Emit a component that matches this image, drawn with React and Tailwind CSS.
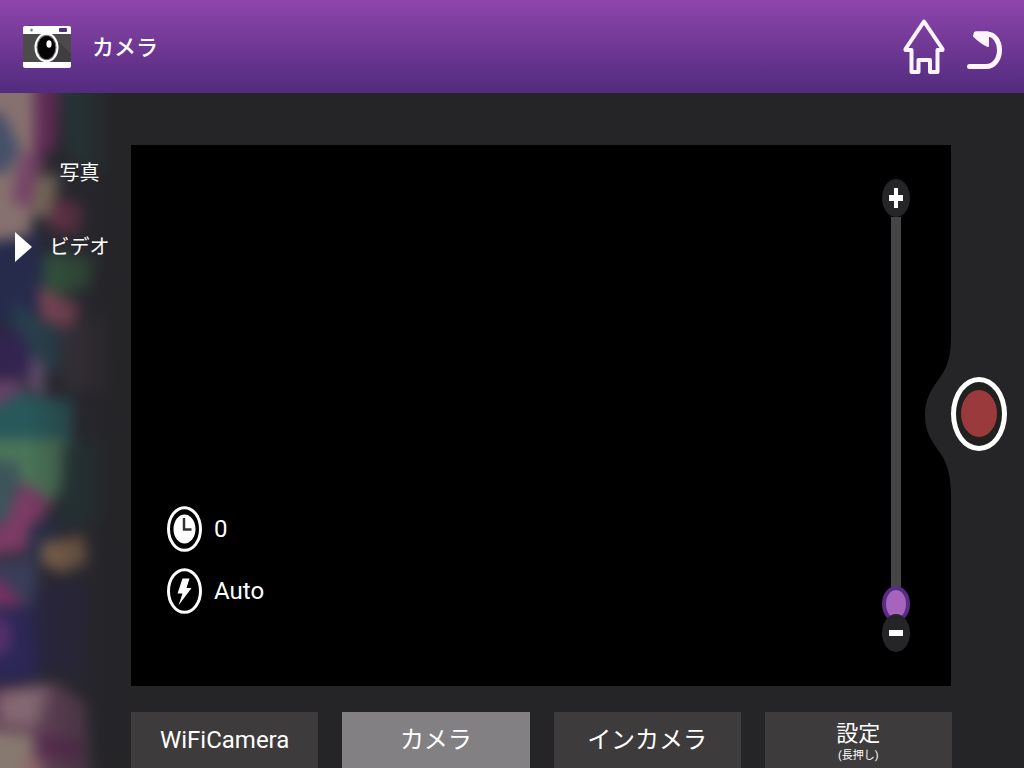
import { useState } from "react";

const modes = [
  { id: "photo", label: "写真" },
  { id: "video", label: "ビデオ" },
];

const tabs = [
  { id: "wifi", label: "WiFiCamera" },
  { id: "camera", label: "カメラ" },
  { id: "front", label: "インカメラ" },
  { id: "settings", label: "設定", note: "(長押し)" },
];

function CameraIcon() {
  return (
    <svg width="48" height="43" viewBox="0 0 48 43" aria-hidden="true">
      <rect x="5" y="0" width="7" height="3" rx="1" fill="#5a3286" />
      <rect x="0" y="1" width="48" height="42" rx="2" fill="#fff" />
      <rect x="0" y="9" width="48" height="28" fill="#4c4a4b" />
      <path d="M36 17 48 29V37H27Z" fill="#3f3d3f" />
      <rect x="36" y="3" width="8" height="4" rx="1" fill="#51307c" />
      <ellipse cx="8.500" cy="5" rx="1.300" ry="1.600" fill="#78858d" />
      <ellipse cx="23.500" cy="22.500" rx="12" ry="15" fill="#fff" />
      <ellipse cx="23.500" cy="22.500" rx="10" ry="12.800" fill="#777" />
      <ellipse cx="23.500" cy="22.500" rx="8.800" ry="11.500" fill="#050505" />
      <ellipse cx="26" cy="19" rx="2.600" ry="3.700" fill="#fff" />
    </svg>
  );
}

function HomeIcon() {
  return (
    <svg width="42" height="56" viewBox="0 0 42 56" fill="none" stroke="#fff4ff" strokeWidth="4" strokeLinejoin="round" aria-hidden="true">
      <path d="M21 2.500 2.500 30V31H8.500V53H15.500V41H27V53H34.500V31H39.500V30Z" />
    </svg>
  );
}

function BackIcon() {
  return (
    <svg width="36" height="39" viewBox="0 0 36 39" aria-hidden="true">
      <path d="M10 3H20C28 3 32.500 11 32.500 19S28 35.500 19 35.500H2.500" fill="none" stroke="#fff4ff" strokeWidth="5" strokeLinecap="round" />
      <path d="M8 1.500H21V15Q14 12 7 5Z" fill="#fff4ff" stroke="#fff4ff" strokeWidth="2" strokeLinejoin="round" />
    </svg>
  );
}

function ClockIcon() {
  return (
    <svg width="35" height="46" viewBox="0 0 35 46" fill="none" aria-hidden="true">
      <ellipse cx="17.500" cy="23" rx="16" ry="21.300" stroke="#fff" strokeWidth="3" />
      <ellipse cx="17.500" cy="23" rx="11" ry="14.500" fill="#fff" />
      <path d="M17 12V23.500H24.500" stroke="#333" strokeWidth="2.500" />
    </svg>
  );
}

function FlashIcon() {
  return (
    <svg width="35" height="46" viewBox="0 0 35 46" fill="none" aria-hidden="true">
      <ellipse cx="17.500" cy="23" rx="16" ry="21.300" stroke="#fff" strokeWidth="3" />
      <path d="M15.500 10.500H22.500L19.500 20H24.500L11.500 37.500 15.500 25.500H10.500Z" fill="#fff" />
    </svg>
  );
}

// low-poly wallpaper, fades into the panel colour on the right
function Wallpaper() {
  return (
    <svg className="absolute inset-0 h-full w-full" viewBox="0 0 131 675" preserveAspectRatio="none" aria-hidden="true">
      <defs>
        <filter id="soft" filterUnits="userSpaceOnUse" x="-40" y="-40" width="220" height="760" colorInterpolationFilters="sRGB">
          <feGaussianBlur stdDeviation="7" />
        </filter>
        <linearGradient id="fade" x1="0" x2="1" y1="0" y2="0">
          <stop offset="0.200" stopColor="#252427" stopOpacity="0" />
          <stop offset="0.600" stopColor="#252427" stopOpacity="0.400" />
          <stop offset="0.900" stopColor="#252427" />
        </linearGradient>
      </defs>
      <rect width="131" height="675" fill="#292832" />
      <g filter="url(#soft)">
        <path d="M-40-40H34L36 80 30 150-40 155Z" fill="#87716f" />
        <path d="M-40 5 4 22 20 55 8 80-40 80Z" fill="#455069" />
        <path d="M36-40H62L56 55 34 66Z" fill="#6a2d5c" />
        <path d="M60-40H130V90L68 65Z" fill="#263b3c" />
        <path d="M22 58 45 66 34 118 12 108Z" fill="#754266" />
        <path d="M36 85 60 80 54 126 32 122Z" fill="#7c6f5e" />
        <path d="M54 105 84 112 80 142 48 136Z" fill="#6e344c" />
        <path d="M-40 154 42 140 46 205 28 235-40 225Z" fill="#262b4c" />
        <path d="M46 160 98 164 92 194 52 204 43 192Z" fill="#355a40" />
        <path d="M38 194 82 212 72 238 42 226Z" fill="#86495c" />
        <path d="M14 210 42 226 62 238 60 280 12 262Z" fill="#28404d" />
        <path d="M62 238 110 220 116 300 64 296Z" fill="#39333c" />
        <path d="M-40 230 24 240 34 282-40 290Z" fill="#32244f" />
        <path d="M32 262 46 274 44 304 28 296Z" fill="#665070" />
        <path d="M-40 288 22 286 24 310-40 328Z" fill="#634266" />
        <path d="M-40 336 20 300 74 308 72 350-40 350Z" fill="#28585a" />
        <path d="M-40 346 74 346 62 396 48 418 22 392-40 368Z" fill="#4a7558" />
        <path d="M-40 364 20 370 14 430-40 440Z" fill="#3e545b" />
        <path d="M64 352 110 346 106 430 62 436Z" fill="#24373a" />
        <path d="M22 388 52 408 26 458-40 466 8 424Z" fill="#7c3b64" />
        <path d="M30 432 60 424 52 470 26 466Z" fill="#27304a" />
        <path d="M42 450 86 442 90 470 62 480 42 470Z" fill="#88694f" />
        <path d="M-40 470 34 464 46 512-40 518Z" fill="#3a3d58" />
        <path d="M-40 484 2 488 24 512-40 514Z" fill="#7a2f60" />
        <path d="M-40 518 32 514 40 586-40 592Z" fill="#2b2756" />
        <path d="M34 495 90 488 86 576 36 578Z" fill="#292540" />
        <path d="M-40 526 10 526 10 560-40 566Z" fill="#56306c" />
        <path d="M-40 598 56 590 88 610 98 740H-40Z" fill="#644259" />
        <path d="M0 600 52 592 38 634 0 630Z" fill="#836872" />
        <path d="M38 640 84 648 80 668 42 664Z" fill="#5f2d55" />
        <path d="M-40 634 34 642 28 740H-40Z" fill="#87796f" />
        <path d="M24 658 44 670 40 740 18 740Z" fill="#906a6c" />
      </g>
      <rect width="131" height="675" fill="url(#fade)" />
    </svg>
  );
}

export default function App() {
  const [mode, setMode] = useState("video");
  const [tab, setTab] = useState("camera");
  const [zoom, setZoom] = useState(0);

  return (
    <div className="flex min-h-screen flex-col bg-[#252427] font-['Roboto','Noto_Sans_CJK_JP',sans-serif] text-white" lang="ja">
      <header className="flex h-[93px] shrink-0 items-center bg-linear-to-b from-[#8f45ac] to-[#522b7e] pr-[21px] pl-[23px]">
        <CameraIcon />
        <h1 className="ml-[21px] pt-0.5 text-[22px] leading-8 font-medium">カメラ</h1>
        <div className="ml-auto flex items-center gap-[22px]">
          <button aria-label="ホーム">
            <HomeIcon />
          </button>
          <button aria-label="戻る" className="pt-2">
            <BackIcon />
          </button>
        </div>
      </header>

      <div className="flex flex-1">
        <nav className="relative w-[131px] shrink-0 overflow-hidden">
          <Wallpaper />
          <div className="relative flex flex-col gap-[42px] pt-16 pl-7">
            {modes.map((m) => (
              <button
                key={m.id}
                onClick={() => setMode(m.id)}
                className="relative text-center text-[20px] leading-8"
              >
                {mode === m.id && (
                  <svg className="absolute top-0 -left-[13px]" width="18" height="32" viewBox="0 0 18 32" aria-hidden="true">
                    <path d="M0 1 17 16 0 31Z" fill="#fff" />
                  </svg>
                )}
                {m.label}
              </button>
            ))}
          </div>
        </nav>

        <main className="flex flex-1 flex-col pt-[52px]">
          <div className="flex flex-1">
            <section className="flex flex-1 justify-between bg-black pr-[41px] pl-9">
              <div className="flex flex-col justify-end gap-4 pb-[72px] text-[24px] leading-8">
                <button className="flex items-center gap-3">
                  <ClockIcon />
                  0
                </button>
                <button className="flex items-center gap-3">
                  <FlashIcon />
                  Auto
                </button>
              </div>

              <div className="flex flex-col items-center py-[34px]">
                <button
                  aria-label="ズームイン"
                  onClick={() => setZoom(Math.min(100, zoom + 10))}
                  className="flex h-[38px] w-7 items-center justify-center rounded-[50%] bg-[#252427]"
                >
                  <svg width="14" height="20" viewBox="0 0 14 20" aria-hidden="true">
                    <path d="M5 0H9V7H14V13H9V20H5V13H0V7H5Z" fill="#fff" />
                  </svg>
                </button>
                <input
                  type="range"
                  aria-label="ズーム"
                  min="0"
                  max="100"
                  value={zoom}
                  onChange={(e) => setZoom(Number(e.target.value))}
                  className="min-h-0 w-7 flex-1 appearance-none bg-linear-to-r from-[#454446] to-[#454446] bg-[size:10px_100%] bg-center bg-no-repeat [direction:rtl] [writing-mode:vertical-lr] [&::-webkit-slider-thumb]:h-9 [&::-webkit-slider-thumb]:w-7 [&::-webkit-slider-thumb]:appearance-none [&::-webkit-slider-thumb]:rounded-[50%] [&::-webkit-slider-thumb]:border-4 [&::-webkit-slider-thumb]:border-[#5c2b85] [&::-webkit-slider-thumb]:bg-[#a565bd]"
                />
                <button
                  aria-label="ズームアウト"
                  onClick={() => setZoom(Math.max(0, zoom - 10))}
                  className="relative -mt-2 flex h-[38px] w-7 items-center justify-center rounded-[50%] bg-[#252427]"
                >
                  <svg width="14" height="6" viewBox="0 0 14 6" aria-hidden="true">
                    <path d="M0 0H14V6H0Z" fill="#fff" />
                  </svg>
                </button>
              </div>
            </section>

            <aside className="relative flex w-[73px] shrink-0 items-center">
              <svg className="absolute top-1/2 -left-[26px] -translate-y-1/2" width="27" height="160" viewBox="0 0 27 160" aria-hidden="true">
                <path d="M27 0H26C26 18 23 30 16 40C6 54 0 62 0 79S6 104 16 118C23 129 26 142 26 160H27Z" fill="#252427" />
              </svg>
              <button
                aria-label="録画"
                className="relative mb-1 flex h-[74px] w-14 items-center justify-center rounded-[50%] border-[5px] border-white bg-[#20201f]"
              >
                <span className="h-[47px] w-9 rounded-[50%] bg-[#9a3a3c]" />
              </button>
            </aside>
          </div>

          <div className="mt-[26px] mr-[72px] grid grid-cols-4 gap-6">
            {tabs.map((t) => (
              <button
                key={t.id}
                onClick={() => setTab(t.id)}
                className={`flex h-14 flex-col items-center justify-center ${
                  tab === t.id ? "bg-[#828083]" : "bg-[#3d3b3b]"
                }`}
              >
                <span className={t.note ? "text-[22px] leading-8" : "text-[24px] leading-8"}>{t.label}</span>
                {t.note && <span className="text-[11px] leading-3">{t.note}</span>}
              </button>
            ))}
          </div>
        </main>
      </div>
    </div>
  );
}
